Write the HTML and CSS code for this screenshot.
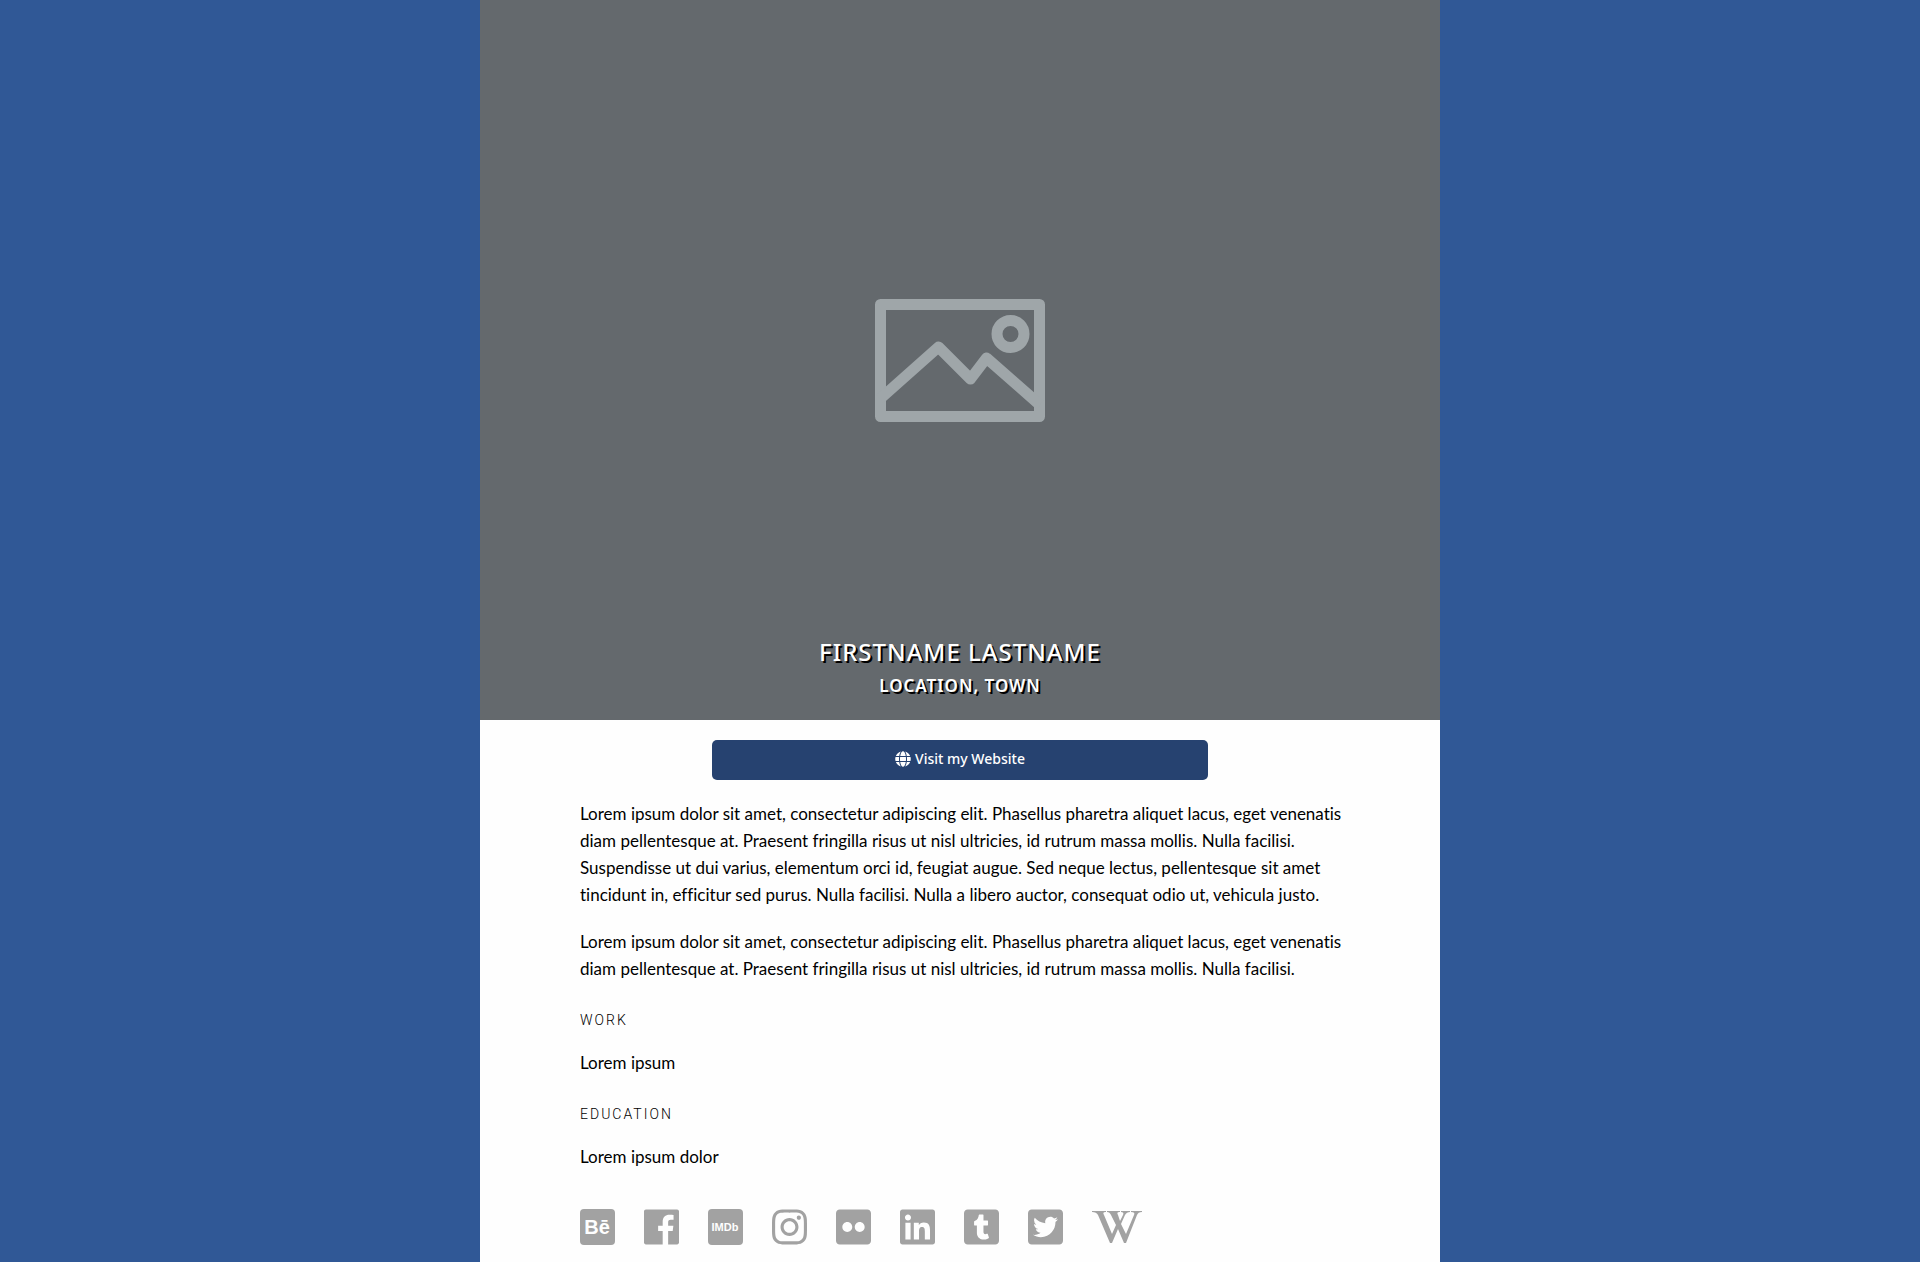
FILE: index.html
```html
<!DOCTYPE html>
<html lang="en">
<head>
<meta charset="utf-8">
<meta name="viewport" content="width=device-width, initial-scale=1">
<title>Firstname Lastname</title>
<link rel="stylesheet" href="styles.css">
</head>
<body>
<main class="card">
  <header class="hero">
    <svg class="hero-picture" viewBox="0 0 170 123" aria-hidden="true">
      <g fill="none" stroke="#9fa6a9" stroke-width="11" stroke-linejoin="round">
        <rect x="5.500" y="5.500" width="159" height="112"/>
        <path d="M5 100L63.500 48L95.500 80L111.500 59L165 106"/>
        <circle cx="135.500" cy="35" r="13.500"/>
      </g>
    </svg>
    <div class="hero-text">
      <h1 class="name">Firstname Lastname</h1>
      <p class="location">Location, Town</p>
    </div>
  </header>
  <div class="action">
    <a class="website" href="#">
      <svg class="globe" viewBox="0 0 496 512" aria-hidden="true"><path d="M336.500 160C322 70.700 287.800 8 248 8s-74 62.700-88.500 152h177zM152 256c0 22.200 1.200 43.500 3.300 64h185.300c2.100-20.500 3.300-41.800 3.300-64s-1.200-43.500-3.300-64H155.300c-2.100 20.500-3.300 41.800-3.300 64zm324.700-96c-28.600-67.900-86.500-120.400-158-141.600 24.400 33.800 41.200 84.700 50 141.600h108zM177.200 18.400C105.800 39.600 47.800 92.100 19.300 160h108c8.700-56.900 25.500-107.800 49.900-141.600zM487.400 192H372.700c2.100 21 3.300 42.500 3.300 64s-1.200 43-3.300 64h114.600c5.500-20.500 8.600-41.800 8.600-64s-3.100-43.500-8.500-64zM120 256c0-21.500 1.200-43 3.300-64H8.600C3.200 212.500 0 233.800 0 256s3.200 43.500 8.600 64h114.600c-2-21-3.200-42.500-3.200-64zm39.500 96c14.500 89.300 48.700 152 88.500 152s74-62.700 88.500-152h-177zm159.300 141.600c71.400-21.200 129.400-73.700 158-141.600h-108c-8.800 56.900-25.600 107.800-50 141.600zM19.300 352c28.600 67.900 86.500 120.400 158 141.600-24.400-33.800-41.200-84.700-50-141.600h-108z"/></svg>
      <span>Visit my Website</span>
    </a>
  </div>
  <div class="content">
    <p class="text">Lorem ipsum dolor sit amet, consectetur adipiscing elit. Phasellus pharetra aliquet lacus, eget venenatis diam pellentesque at. Praesent fringilla risus ut nisl ultricies, id rutrum massa mollis. Nulla facilisi. Suspendisse ut dui varius, elementum orci id, feugiat augue. Sed neque lectus, pellentesque sit amet tincidunt in, efficitur sed purus. Nulla facilisi. Nulla a libero auctor, consequat odio ut, vehicula justo.</p>
    <p class="text">Lorem ipsum dolor sit amet, consectetur adipiscing elit. Phasellus pharetra aliquet lacus, eget venenatis diam pellentesque at. Praesent fringilla risus ut nisl ultricies, id rutrum massa mollis. Nulla facilisi.</p>
    <h2 class="label">Work</h2>
    <p class="text">Lorem ipsum</p>
    <h2 class="label">Education</h2>
    <p class="text">Lorem ipsum dolor</p>
    <nav class="social" aria-label="Social profiles">
      <a href="#" aria-label="Behance"><svg class="icon" viewBox="0 0 35 40"><rect y="2" width="35" height="36" rx="4"/><text class="be" x="17" y="27">Bē</text></svg></a>
      <a href="#" aria-label="Facebook"><svg class="icon" viewBox="0 0 448 512"><path d="M448 56.700v398.500c0 13.700-11.100 24.700-24.700 24.700H309.100V306.500h58.200l8.700-67.600h-67v-43.200c0-19.600 5.400-32.900 33.500-32.900h35.800v-60.500c-6.200-.8-27.400-2.700-52.200-2.700-51.600 0-87 31.500-87 89.400v49.900h-58.400v67.600h58.400V480H24.700C11.100 480 0 468.900 0 455.300V56.700C0 43.100 11.100 32 24.700 32h398.500c13.700 0 24.800 11.100 24.800 24.700z"/></svg></a>
      <a href="#" aria-label="IMDb"><svg class="icon" viewBox="0 0 35 40"><rect y="2" width="35" height="36" rx="4"/><text class="imdb" x="17" y="24">IMDb</text></svg></a>
      <a href="#" aria-label="Instagram"><svg class="icon" viewBox="0 0 448 512"><path d="M224.100 141c-63.600 0-114.900 51.300-114.900 114.900s51.300 114.900 114.900 114.900S339 319.500 339 255.900 287.700 141 224.100 141zm0 189.600c-41.100 0-74.700-33.500-74.700-74.700s33.500-74.700 74.700-74.700 74.700 33.500 74.700 74.700-33.600 74.700-74.700 74.700zm146.400-194.300c0 14.900-12 26.800-26.800 26.800-14.900 0-26.800-12-26.800-26.800s12-26.800 26.800-26.800 26.800 12 26.800 26.800zm76.100 27.200c-1.700-35.900-9.900-67.700-36.200-93.900-26.200-26.200-58-34.400-93.900-36.200-37-2.100-147.900-2.100-184.900 0-35.800 1.700-67.600 9.900-93.900 36.100s-34.400 58-36.200 93.900c-2.100 37-2.100 147.900 0 184.900 1.700 35.900 9.900 67.700 36.200 93.900s58 34.400 93.900 36.200c37 2.100 147.900 2.100 184.900 0 35.900-1.700 67.700-9.900 93.900-36.200 26.200-26.200 34.400-58 36.200-93.900 2.100-37 2.100-147.800 0-184.800zM398.800 388c-7.800 19.600-22.900 34.700-42.600 42.600-29.500 11.700-99.500 9-132.100 9s-102.700 2.600-132.100-9c-19.600-7.800-34.700-22.900-42.600-42.600-11.700-29.500-9-99.500-9-132.100s-2.600-102.700 9-132.100c7.800-19.600 22.900-34.700 42.600-42.600 29.500-11.700 99.500-9 132.100-9s102.700-2.600 132.100 9c19.600 7.800 34.700 22.900 42.600 42.600 11.700 29.500 9 99.500 9 132.100s2.700 102.700-9 132.100z"/></svg></a>
      <a href="#" aria-label="Flickr"><svg class="icon" viewBox="0 0 448 512"><path d="M400 32H48C21.500 32 0 53.500 0 80v352c0 26.500 21.500 48 48 48h352c26.500 0 48-21.500 48-48V80c0-26.500-21.500-48-48-48zM144.500 319c-35.100 0-63.500-28.400-63.500-63.500s28.400-63.500 63.500-63.500 63.500 28.400 63.500 63.500-28.400 63.500-63.500 63.500zm159 0c-35.100 0-63.500-28.400-63.500-63.500s28.400-63.500 63.500-63.500 63.500 28.400 63.500 63.500-28.400 63.500-63.500 63.500z"/></svg></a>
      <a href="#" aria-label="LinkedIn"><svg class="icon" viewBox="0 0 448 512"><path d="M416 32H31.900C14.300 32 0 46.500 0 64.300v383.400C0 465.500 14.300 480 31.900 480H416c17.600 0 32-14.500 32-32.300V64.300c0-17.800-14.400-32.300-32-32.300zM135.400 416H69V202.200h66.500V416zm-33.200-243c-21.300 0-38.500-17.300-38.500-38.500S80.900 96 102.200 96c21.200 0 38.500 17.300 38.500 38.500 0 21.300-17.200 38.500-38.500 38.500zm282.100 243h-66.400V312c0-24.800-.5-56.700-34.500-56.700-34.600 0-39.900 27-39.900 54.900V416h-66.400V202.200h63.700v29.200h.9c8.900-16.800 30.600-34.500 62.900-34.500 67.200 0 79.700 44.300 79.700 101.900V416z"/></svg></a>
      <a href="#" aria-label="Tumblr"><svg class="icon" viewBox="0 0 448 512"><path d="M400 32H48C21.500 32 0 53.500 0 80v352c0 26.500 21.500 48 48 48h352c26.500 0 48-21.500 48-48V80c0-26.500-21.500-48-48-48zm-82.300 364.200c-8.500 9.100-31.200 19.800-60.900 19.800-75.500 0-91.900-55.500-91.900-87.900v-90h-29.700c-3.400 0-6.200-2.800-6.200-6.200v-42.500c0-4.500 2.800-8.500 7.100-10 38.800-13.700 50.900-47.500 52.700-73.200.5-6.900 4.100-10.200 10-10.200h44.300c3.400 0 6.200 2.800 6.200 6.200v72h51.900c3.400 0 6.200 2.800 6.200 6.200v51.100c0 3.400-2.800 6.200-6.200 6.200h-52.100V321c0 21.400 14.800 33.500 42.500 22.400 3-1.200 5.600-2 8-1.400 2.200.5 3.600 2.100 4.600 4.900l13.800 40.200c1 3.200 2 6.700-.3 9.100z"/></svg></a>
      <a href="#" aria-label="Twitter"><svg class="icon" viewBox="0 0 448 512"><path d="M400 32H48C21.500 32 0 53.500 0 80v352c0 26.500 21.500 48 48 48h352c26.500 0 48-21.500 48-48V80c0-26.500-21.500-48-48-48zm-48.900 158.800c.2 2.800.2 5.700.2 8.500 0 86.700-66 186.600-186.600 186.600-37.200 0-71.700-10.800-100.700-29.400 5.300.6 10.400.8 15.800.8 30.700 0 58.900-10.400 81.400-28-28.800-.6-53-19.500-61.300-45.500 10.100 1.500 19.200 1.500 29.600-1.200-30-6.100-52.500-32.500-52.500-64.400v-.8c8.700 4.900 18.900 7.900 29.600 8.300a65.447 65.447 0 0 1-29.200-54.600c0-12.200 3.200-23.400 8.900-33.100 32.300 39.800 80.800 65.800 135.200 68.600-9.300-44.500 24-80.600 64-80.600 18.900 0 35.900 7.900 47.900 20.700 14.800-2.800 29-8.300 41.600-15.800-4.900 15.200-15.200 28-28.800 36.100 13.200-1.400 26-5.100 37.800-10.200-8.900 13.100-20.100 24.700-32.900 34z"/></svg></a>
      <a href="#" aria-label="Wikipedia"><svg class="icon icon-wide" viewBox="0 0 50 40"><path d="M0 4h14v1c-3 0-3 1-2 3l8 19 4-9-5-10c-1-2-2-3-4-3V4h13v1c-3 0-3 1-2 3l2 6 3-6c1-2 0-3-2-3V4h9v1c-2 0-4 1-5 3l-4 9 5 10 8-19c1-2 0-3-3-3V4h11v1c-3 0-4 1-5 3L34 36h-2l-6-14-6 14h-2L6 8C5 6 3 5 0 5z"/></svg></a>
    </nav>
  </div>
</main>
</body>
</html>
```
FILE: styles.css
```css
* {
  box-sizing: border-box;
}

body {
  margin: 0;
  background: #305896;
  color: #000;
  font-family: Lato, "Liberation Sans", sans-serif;
}

.card {
  width: 50%;
  min-height: 100vh;
  margin: 0 auto;
  background: #fefefe;
}

.hero {
  display: grid;
  aspect-ratio: 4 / 3;
  background: #64696d;
}

.hero-picture,
.hero-text {
  grid-area: 1 / 1;
}

.hero-picture {
  width: 170px;
  place-self: center;
}

.hero-text {
  align-self: end;
  padding-bottom: 20px;
  color: #fff;
  font-family: "Noto Sans", sans-serif;
  text-align: center;
  text-transform: uppercase;
  text-shadow: 2px 2px 0 #000;
}

.name {
  margin: 0 0 2px;
  font-size: 24px;
  font-weight: 500;
  line-height: 36px;
  letter-spacing: 1px;
}

.location {
  margin: 0;
  font-size: 17px;
  font-weight: 600;
  line-height: 28px;
  letter-spacing: 1px;
}

.action {
  padding: 20px 20px 0;
}

.content {
  padding: 20px 96px 14px 100px;
}

.website {
  display: flex;
  align-items: center;
  justify-content: center;
  gap: 4px;
  max-width: 496px;
  height: 40px;
  margin: 0 auto;
  padding-bottom: 3px;
  border-radius: 5px;
  background: #264270;
  color: #fff;
  font: 500 14px/24px "Noto Sans", sans-serif;
  text-decoration: none;
}

.globe {
  width: 16px;
  height: 16px;
  fill: currentColor;
}

.text {
  margin: 0 0 20px;
  font-size: 17px;
  line-height: 27px;
  font-variant-ligatures: none;
}

.label {
  margin: 28px 0 19px;
  font: 300 14px/20px Roboto, sans-serif;
  letter-spacing: 2px;
  text-transform: uppercase;
}

.social {
  display: flex;
  gap: 29px;
  padding-top: 17px;
}

.social a {
  color: #a2a2a2;
}

.icon {
  display: block;
  width: 35px;
  height: 40px;
  fill: currentColor;
}

.icon-wide {
  width: 50px;
}

.icon text {
  fill: #fefefe;
  font-family: "Liberation Sans", sans-serif;
  font-weight: 700;
  text-anchor: middle;
}

.icon .be {
  font-size: 20px;
}

.icon .imdb {
  font-size: 11px;
}
```
